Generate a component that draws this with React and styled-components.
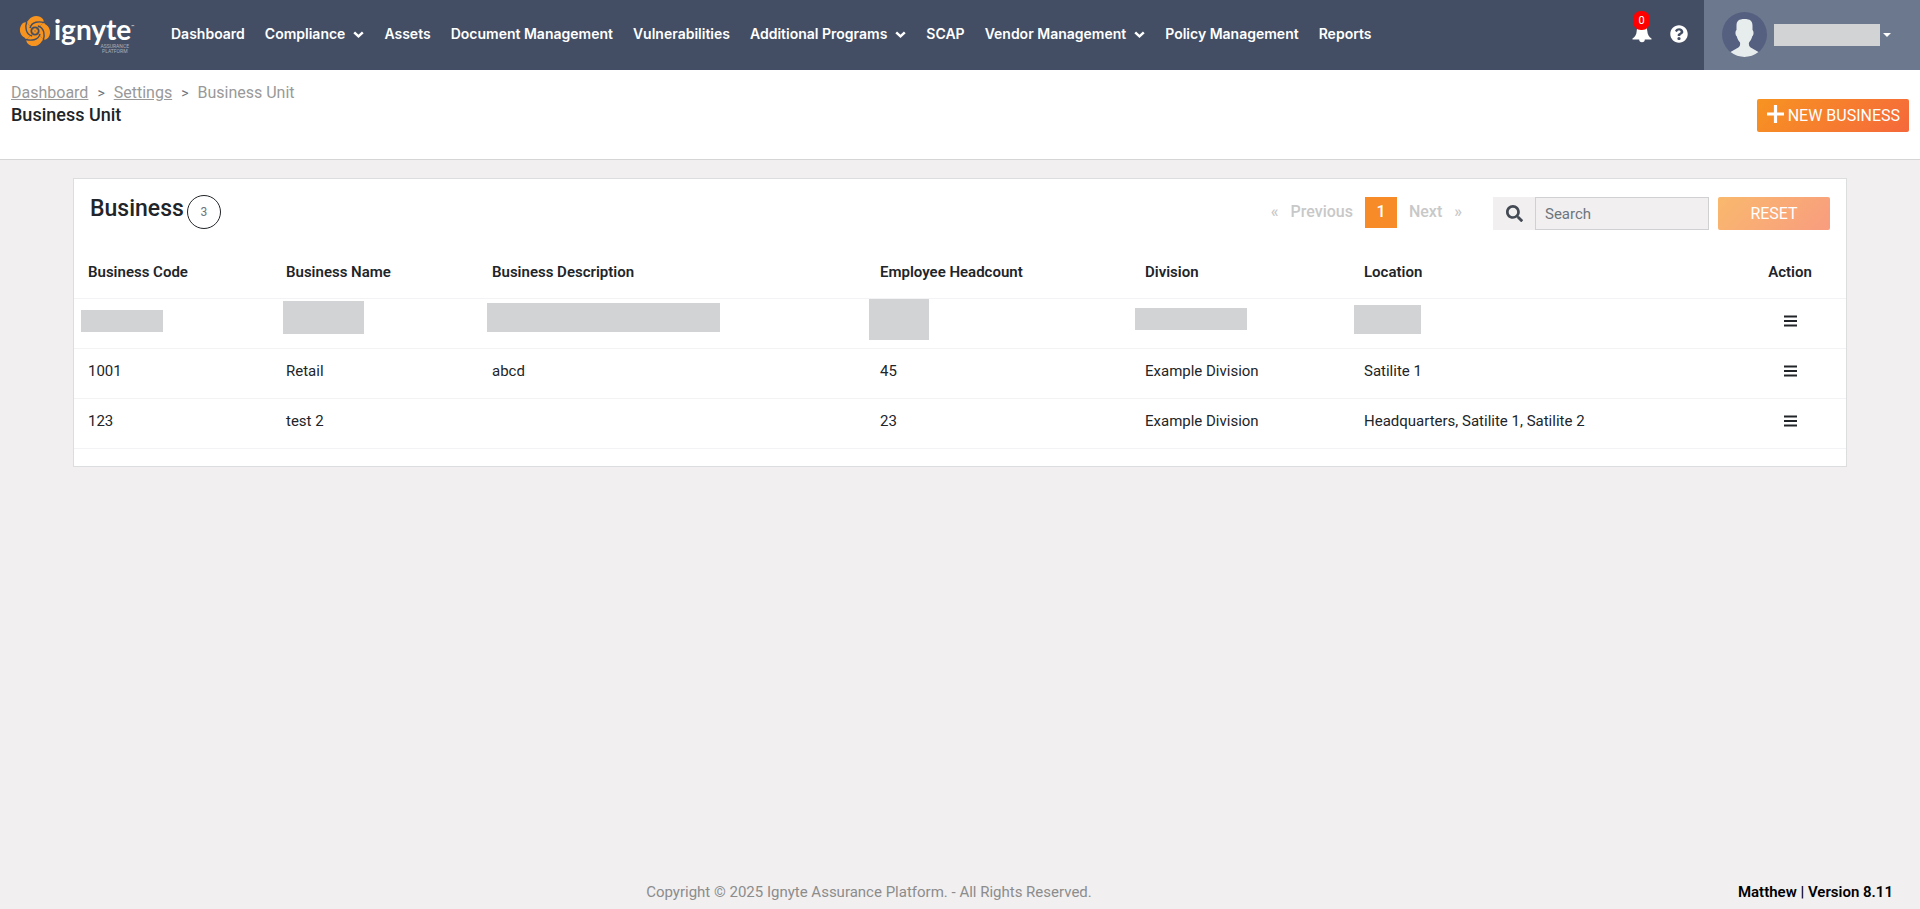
import React from 'react';
import styled, { createGlobalStyle, css } from 'styled-components';
import { FaQuestionCircle, FaSearch } from 'react-icons/fa';

const GlobalStyle = createGlobalStyle`
  *, *::before, *::after { box-sizing: border-box; }
  body {
    margin: 0;
    background: #f1eff0;
    color: #212529;
    font-family: Roboto, "Liberation Sans", sans-serif;
    font-size: 15px;
    line-height: 20px;
  }
  button, input { font-family: inherit; }
`;

const Page = styled.div`
  display: flex;
  flex-direction: column;
  min-height: 100vh;
`;

const TopBar = styled.header`
  display: flex;
  align-items: stretch;
  height: 70px;
  background: #434e64;
`;

const Brand = styled.a`
  display: flex;
  gap: 3px;
  width: 159px;
  padding: 15px 0 0 19px;
  color: #fff;
  text-decoration: none;
`;

const BrandText = styled.span`
  display: flex;
  flex-direction: column;
  width: 82px;
`;

const BrandName = styled.span`
  display: flex;
  font-family: Lato, sans-serif;
  font-size: 28px;
  font-weight: 700;
  line-height: 29px;
  white-space: nowrap;
`;

const TradeMark = styled.span`
  padding-top: 10px;
  font-size: 4px;
  font-weight: 400;
  line-height: 4px;
`;

const BrandTag = styled.span`
  align-self: flex-end;
  padding-right: 7px;
  font-size: 5px;
  line-height: 5px;
  text-align: center;
  color: #a9afbb;
`;

const Nav = styled.nav`
  display: flex;
  flex: 1;
  align-items: center;
  gap: 20px;
  padding: 0 0 2px 12px;
`;

const NavLink = styled.a`
  display: flex;
  align-items: center;
  gap: 8px;
  color: #fff;
  font-family: Inter, sans-serif;
  font-size: 14px;
  font-weight: 600;
  white-space: nowrap;
  text-decoration: none;
`;

const Tools = styled.div`
  display: flex;
  align-items: flex-start;
  gap: 18px;
  padding: 25px 16px 0 0;
  color: #fff;
`;

const ToolButton = styled.button`
  position: relative;
  display: flex;
  padding: 0;
  border: 0;
  background: none;
  color: inherit;
`;

const AlertCount = styled.span`
  position: absolute;
  top: -14px;
  left: 1px;
  width: 17px;
  height: 19px;
  border-radius: 8px;
  background: #f00;
  font-size: 11px;
  line-height: 19px;
  text-align: center;
`;

const UserMenu = styled.button`
  display: flex;
  align-items: center;
  width: 216px;
  padding: 0 0 1px 18px;
  border: 0;
  background: #6c788e;
`;

const Mask = styled.span`
  display: block;
  width: ${(p) => p.$w}px;
  height: ${(p) => p.$h}px;
  margin: ${(p) => p.$top || 0}px 0 0 ${(p) => p.$left || 0}px;
  background: #d2d3d5;
`;

const Caret = styled.span`
  margin-left: 3px;
  border: 4px solid transparent;
  border-top-color: #fff;
  border-bottom: 0;
`;

const SubHeader = styled.section`
  display: flex;
  justify-content: space-between;
  align-items: flex-start;
  height: 90px;
  padding: 12px 11px 0 11px;
  border-bottom: 1px solid #d5d5d5;
  background: #fff;
`;

const Crumbs = styled.ol`
  display: flex;
  gap: 9px;
  margin: 0;
  padding: 0;
  list-style: none;
  color: #999;
  font-size: 16px;
  line-height: 22px;

  li + li::before {
    content: '>';
    margin-right: 9px;
    color: #6c757d;
    font-size: 14px;
  }
  a { color: inherit; }
`;

const PageTitle = styled.h1`
  margin: 0;
  color: #212529;
  font-size: 18px;
  font-weight: 500;
  line-height: 22px;
`;

const gradientButton = css`
  display: flex;
  align-items: center;
  justify-content: center;
  height: 33px;
  border: 0;
  border-radius: 2px;
  background: linear-gradient(135deg, #f79421, #f5683b);
  color: #fff;
  font-size: 16px;
  text-transform: uppercase;
`;

const NewButton = styled.button`
  ${gradientButton}
  gap: 4px;
  margin-top: 17px;
  padding: 0 9px 0 10px;

  svg { margin-bottom: 4px; }
`;

const ResetButton = styled.button`
  ${gradientButton}
  width: 112px;
  margin: 2px 0 0 9px;
  opacity: 0.65;
`;

const Content = styled.main`
  flex: 1;
  padding: 18px 73px;
`;

const Card = styled.section`
  padding-bottom: 17px;
  border: 1px solid #dcdddf;
  background: #fff;
`;

const CardHead = styled.div`
  display: flex;
  align-items: flex-start;
  height: 67px;
  padding: 16px 16px 0;
`;

const CardTitle = styled.h2`
  flex: 1;
  display: flex;
  gap: 3px;
  margin: 0;
  font-size: 23px;
  font-weight: 500;
  line-height: 28px;
`;

const Count = styled.span`
  width: 34px;
  height: 34px;
  border: 1px solid #212529;
  border-radius: 50%;
  color: #6c757d;
  font-size: 12px;
  font-weight: 400;
  line-height: 32px;
  text-align: center;
`;

const Pager = styled.nav`
  display: flex;
  gap: 12px;
  height: 31px;
  margin: 2px 31px 0 0;
  color: #c8c8c8;
  font-size: 16px;
  font-weight: 500;
  line-height: 30px;
`;

const PagerLink = styled.a`
  color: inherit;
  text-decoration: none;
`;

const CurrentPage = styled(PagerLink)`
  width: 32px;
  background: #f78b28;
  color: #fff;
  text-align: center;
`;

const SearchBox = styled.label`
  display: flex;
  height: 33px;
  margin-top: 2px;
  background: #f1eff0;
`;

const SearchIcon = styled.span`
  display: flex;
  align-items: center;
  justify-content: center;
  width: 42px;
  color: #434a54;
`;

const SearchInput = styled.input`
  width: 174px;
  padding: 0 9px;
  border: 1px solid #d0d0d2;
  border-radius: 0;
  background: #f1eff0;
  font-size: 15px;

  &::placeholder { color: #6c757d; }
`;

const Table = styled.table`
  width: 100%;
  table-layout: fixed;
  border-collapse: collapse;
`;

const Col = styled.col`
  width: ${(p) => p.$w}px;
`;

const Row = styled.tr`
  height: 50px;
  border-bottom: 1px solid #f3f3f5;
`;

const HeadCell = styled.th`
  height: 52px;
  padding: 0 14px;
  font-size: 15px;
  font-weight: 600;
  text-align: ${(p) => (p.$center ? 'center' : 'left')};
`;

const Cell = styled.td`
  padding: 0 14px 4px;
  text-align: ${(p) => (p.$center ? 'center' : 'left')};
`;

const MaskCell = styled.td`
  padding: 0;
  vertical-align: top;
`;

const MenuButton = styled.button`
  display: block;
  margin: 0 auto;
  padding: 0;
  border: 0;
  background: none;

  svg { display: block; }
`;

const Footer = styled.footer`
  display: flex;
  padding: 5px 27px 7px 0;
`;

const Copyright = styled.p`
  flex: 1;
  margin: 0;
  color: #8c8c8c;
  text-align: center;
`;

const Version = styled.strong`
  color: #000;
  font-weight: 600;
`;

const LogoMark = () => (
  <svg width="32" height="32" viewBox="-16 -16 32 32" aria-hidden="true">
    {[0, 90, 180, 270].map((angle) => (
      <path
        key={angle}
        transform={`rotate(${angle})`}
        d="M0 0L-8.800 -8.600C-7.500 -9.400 -6.800 -10.200 -6 -11.400C-3.500 -15 1.500 -16 5 -14.200C8 -12.800 9 -10.500 8.600 -8.800Z"
        fill="#f7941f"
      />
    ))}
    {[0, 90, 180, 270].map((angle) => (
      <path
        key={angle}
        transform={`rotate(${angle})`}
        d="M9.200 -8.300C4.500 -10 -3.500 -9.500 -5 -2.800"
        fill="none"
        stroke="#434e64"
        strokeWidth="1.400"
      />
    ))}
    <circle r="3.700" fill="none" stroke="#434e64" strokeWidth="1.800" />
  </svg>
);

const Chevron = () => (
  <svg width="11" height="8" viewBox="0 0 11 8" aria-hidden="true">
    <path d="M1.200 2.300L5.500 6.300L9.800 2.300" fill="none" stroke="#fff" strokeWidth="2.500" />
  </svg>
);

const Bell = () => (
  <svg width="20" height="18" viewBox="0 0 20 18" aria-hidden="true">
    <path
      d="M10 0C6.500 0 5 2.500 4.700 6C4.500 9.500 3 12 0.500 13.600V14.500H7.200A2.800 2.800 0 0 0 12.800 14.500H19.500V13.600C17 12 15.500 9.500 15.300 6C15 2.500 13.500 0 10 0Z"
      fill="currentColor"
    />
  </svg>
);

const Avatar = () => (
  <svg width="45" height="45" viewBox="0 0 45 45" aria-hidden="true">
    <circle cx="22.500" cy="22.500" r="22.500" fill="#556080" />
    <path
      d="M14.500 13.500C14.500 9 17 7 22.500 7S30.500 9 30.500 13.500V18C32 19 31.800 23.500 30.300 24.200C29.500 27 28.300 29 27 30.500C26.500 33.500 27.500 35 30 36.300L36.500 40A22.500 22.500 0 0 1 8.500 40L15 36.300C17.500 35 18.500 33.500 18 30.500C16.700 29 15.500 27 14.700 24.200C13.200 23.500 13 19 14.500 18Z"
      fill="#e7eced"
    />
  </svg>
);

const Plus = () => (
  <svg width="17" height="18" viewBox="0 0 17 18" aria-hidden="true">
    <path d="M8.500 0V18M0 9H17" stroke="#fff" strokeWidth="3.200" />
  </svg>
);

const Bars = () => (
  <svg width="14" height="12" viewBox="0 0 14 12" aria-hidden="true">
    <path d="M1 1.500H14M1 6H14M1 10.500H14" stroke="#212529" strokeWidth="2.200" />
  </svg>
);

const navItems = [
  { label: 'Dashboard' },
  { label: 'Compliance', menu: true },
  { label: 'Assets' },
  { label: 'Document Management' },
  { label: 'Vulnerabilities' },
  { label: 'Additional Programs', menu: true },
  { label: 'SCAP' },
  { label: 'Vendor Management', menu: true },
  { label: 'Policy Management' },
  { label: 'Reports' },
];

const columns = [
  { label: 'Business Code', width: 198, mask: { w: 82, h: 22, left: 7, top: 11 } },
  { label: 'Business Name', width: 206, mask: { w: 81, h: 33, left: 11, top: 2 } },
  { label: 'Business Description', width: 388, mask: { w: 233, h: 29, left: 9, top: 4 } },
  { label: 'Employee Headcount', width: 265, mask: { w: 60, h: 41, left: 3, top: 0 } },
  { label: 'Division', width: 219, mask: { w: 112, h: 22, left: 4, top: 9 } },
  { label: 'Location', width: 384, mask: { w: 67, h: 29, left: 4, top: 6 } },
];

const rows = [
  ['1001', 'Retail', 'abcd', '45', 'Example Division', 'Satilite 1'],
  ['123', 'test 2', '', '23', 'Example Division', 'Headquarters, Satilite 1, Satilite 2'],
];

const ActionCell = () => (
  <Cell $center>
    <MenuButton type="button" aria-label="Row actions">
      <Bars />
    </MenuButton>
  </Cell>
);

export default function App() {
  return (
    <Page>
      <GlobalStyle />
      <TopBar>
        <Brand href="#home">
          <LogoMark />
          <BrandText>
            <BrandName>
              ignyte<TradeMark>™</TradeMark>
            </BrandName>
            <BrandTag>ASSURANCE<br />PLATFORM</BrandTag>
          </BrandText>
        </Brand>
        <Nav aria-label="Main">
          {navItems.map((item) => (
            <NavLink key={item.label} href="#nav">
              {item.label}
              {item.menu && <Chevron />}
            </NavLink>
          ))}
        </Nav>
        <Tools>
          <ToolButton type="button" aria-label="Notifications">
            <Bell />
            <AlertCount>0</AlertCount>
          </ToolButton>
          <ToolButton type="button" aria-label="Help">
            <FaQuestionCircle size={18} />
          </ToolButton>
        </Tools>
        <UserMenu type="button" aria-label="Account">
          <Avatar />
          <Mask $w={106} $h={22} $left={7} />
          <Caret />
        </UserMenu>
      </TopBar>

      <SubHeader>
        <div>
          <Crumbs>
            <li><a href="#dashboard">Dashboard</a></li>
            <li><a href="#settings">Settings</a></li>
            <li>Business Unit</li>
          </Crumbs>
          <PageTitle>Business Unit</PageTitle>
        </div>
        <NewButton type="button">
          <Plus />
          New Business
        </NewButton>
      </SubHeader>

      <Content>
        <Card>
          <CardHead>
            <CardTitle>
              Business <Count>3</Count>
            </CardTitle>
            <Pager aria-label="Pages">
              <PagerLink href="#first">«</PagerLink>
              <PagerLink href="#previous">Previous</PagerLink>
              <CurrentPage href="#1">1</CurrentPage>
              <PagerLink href="#next">Next</PagerLink>
              <PagerLink href="#last">»</PagerLink>
            </Pager>
            <SearchBox>
              <SearchIcon>
                <FaSearch size={17} />
              </SearchIcon>
              <SearchInput type="text" placeholder="Search" aria-label="Search" />
            </SearchBox>
            <ResetButton type="button">Reset</ResetButton>
          </CardHead>
          <Table>
            <colgroup>
              {columns.map((c) => (
                <Col key={c.label} $w={c.width} />
              ))}
              <Col $w={112} />
            </colgroup>
            <thead>
              <Row>
                {columns.map((c) => (
                  <HeadCell key={c.label}>{c.label}</HeadCell>
                ))}
                <HeadCell $center>Action</HeadCell>
              </Row>
            </thead>
            <tbody>
              <Row>
                {columns.map(({ label, mask }) => (
                  <MaskCell key={label}>
                    <Mask $w={mask.w} $h={mask.h} $left={mask.left} $top={mask.top} />
                  </MaskCell>
                ))}
                <ActionCell />
              </Row>
              {rows.map((row) => (
                <Row key={row[0]}>
                  {row.map((value, i) => (
                    <Cell key={columns[i].label}>{value}</Cell>
                  ))}
                  <ActionCell />
                </Row>
              ))}
            </tbody>
          </Table>
        </Card>
      </Content>

      <Footer>
        <Copyright>Copyright © 2025 Ignyte Assurance Platform. - All Rights Reserved.</Copyright>
        <Version>Matthew | Version 8.11</Version>
      </Footer>
    </Page>
  );
}
